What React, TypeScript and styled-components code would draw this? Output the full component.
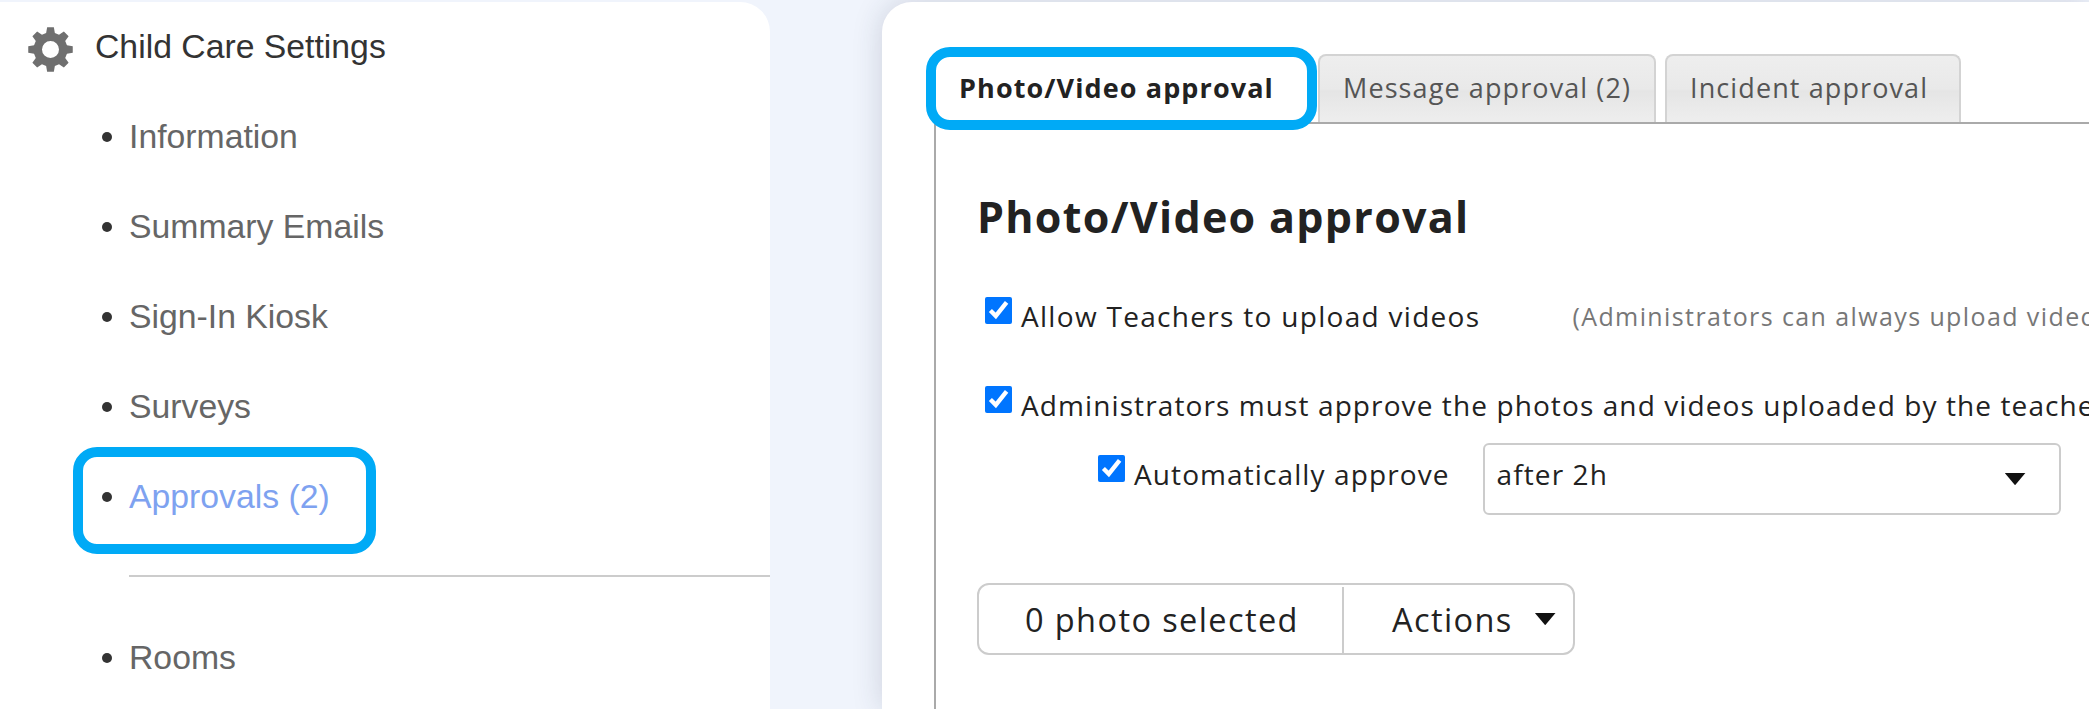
import React from 'react'
import styled, { createGlobalStyle } from 'styled-components'

const GlobalStyle = createGlobalStyle`
    html, body {
        margin: 0;
        padding: 0;
        background: #f0f4fc;
    }
`

const Page = styled.div`
    display: flex;
    justify-content: space-between;
    height: 709px;
    padding-top: 2px;
    box-sizing: border-box;
    overflow: hidden;
`

const Sidebar = styled.aside`
    width: 770px;
    flex: none;
    background: #fff;
    border-top-right-radius: 30px;
    font-family: "Liberation Sans", Arial, sans-serif;
    font-size: 33.75px;
`

const SidebarHeader = styled.div`
    display: flex;
    align-items: center;
    box-sizing: border-box;
    height: 90px;
    padding: 0 0 2px 28px;
    gap: 22px;
    color: #333;

    svg {
        margin-top: 7px;
    }
`

const Menu = styled.ul`
    list-style: none;
    margin: 0;
    padding: 0;
`

const MenuItem = styled.li<{ $active?: boolean }>`
    position: relative;
    display: flex;
    align-items: center;
    box-sizing: border-box;
    height: 90px;
    padding: 0 0 2px 129px;
    color: ${(p) => (p.$active ? '#7ea2f0' : '#666')};

    &::before {
        content: '';
        position: absolute;
        left: 102px;
        top: 40px;
        width: 10px;
        height: 10px;
        border-radius: 50%;
        background: #333;
    }
`

const MenuHighlight = styled.span`
    position: absolute;
    left: 73px;
    top: -5px;
    width: 303px;
    height: 107px;
    box-sizing: border-box;
    border: 10px solid #00aaf6;
    border-radius: 24px;
`

const MenuDivider = styled.li`
    height: 2px;
    margin: 33px 0 36px 129px;
    background: #ccc;
`

const Main = styled.main`
    width: 1207px;
    flex: none;
    background: #fff;
    border-top-left-radius: 30px;
    box-shadow: 0 0 30px rgba(40, 50, 80, 0.18);
    padding: 52px 0 0 52px;
    box-sizing: border-box;
    overflow: hidden;
    white-space: nowrap;
    font-family: "Open Sans", sans-serif;
    color: #222;
`

const TabBar = styled.div`
    display: flex;
    height: 68px;
`

const Tab = styled.div<{ $active?: boolean }>`
    position: relative;
    display: flex;
    align-items: center;
    box-sizing: border-box;
    margin-right: 9px;
    padding: 0 23px 3px;
    border: 2px solid #d3d3d3;
    border-bottom: 0;
    border-radius: 8px 8px 0 0;
    font-size: 27px;
    letter-spacing: 1.1px;
    color: #555;
    background: linear-gradient(#eeeeee, #e9e9e9 50%, #e5e5e5 53%, #eeeeee);

    &:last-child {
        padding-right: 31px;
    }

    ${(p) =>
        p.$active &&
        `
        width: 375px;
        background: #fff;
        color: #222;
        font-weight: 700;
        border-color: #fff;
    `}
`

const TabHighlight = styled.span`
    position: absolute;
    inset: -9px -10px -8px -10px;
    border: 10px solid #00aaf6;
    border-radius: 24px;
`

const TabPanel = styled.section`
    border-top: 2px solid #aaa;
    border-left: 2px solid #aaa;
    padding-left: 41px;
    height: 600px;
`

const Heading = styled.h1`
    margin: 68px 0 0;
    height: 50px;
    line-height: 50px;
    font-size: 43px;
    font-weight: 700;
    letter-spacing: 1.3px;
`

const CheckRow = styled.div<{ $top: number; $indent: number }>`
    display: flex;
    align-items: flex-start;
    margin-top: ${(p) => p.$top}px;
    padding-left: ${(p) => p.$indent}px;
`

const Check = styled.input.attrs({ type: 'checkbox', defaultChecked: true })<{ $offset?: number }>`
    width: 27px;
    height: 27px;
    margin: ${(p) => p.$offset ?? 0}px 9px 0 0;
    flex: none;
`

const CheckLabel = styled.label<{ $offset?: number; $spacing?: number }>`
    height: 40px;
    line-height: 38px;
    margin-top: ${(p) => p.$offset ?? 0}px;
    font-size: 28px;
    letter-spacing: ${(p) => p.$spacing ?? 1.1}px;
`

const Hint = styled.span`
    margin-left: 92px;
    height: 40px;
    line-height: 38px;
    font-size: 25px;
    letter-spacing: 1.4px;
    color: #777;
`

const Caret = styled.span<{ $size: number }>`
    width: ${(p) => p.$size}px;
    height: ${(p) => p.$size * 0.6}px;
    background: #111;
    clip-path: polygon(0 0, 100% 0, 50% 100%);
    flex: none;
`

const SelectBox = styled.div`
    display: flex;
    align-items: center;
    justify-content: space-between;
    box-sizing: border-box;
    flex: none;
    width: 578px;
    height: 72px;
    margin-left: 33px;
    padding: 0 33px 0 12px;
    border: 2px solid #ccc;
    border-radius: 6px;
    font-size: 28px;
    letter-spacing: 1.1px;

    span:first-child {
        margin-top: -10px;
    }
`

const ButtonGroup = styled.div`
    display: inline-flex;
    margin-top: 68px;
    height: 72px;
    box-sizing: border-box;
    border: 2px solid #ccc;
    border-radius: 12px;
    font-size: 32.5px;
    letter-spacing: 1.4px;
`

const GroupCount = styled.div`
    display: flex;
    align-items: center;
    width: 365px;
    padding-left: 46px;
    box-sizing: border-box;
    position: relative;

    &::after {
        content: '';
        position: absolute;
        right: 0;
        top: 2px;
        bottom: 0;
        width: 2px;
        background: #ccc;
    }
`

const GroupActions = styled.div`
    display: flex;
    align-items: center;
    gap: 22px;
    padding: 0 17px 0 48px;
`

const gearPath = (() => {
    const pts: string[] = []
    const c = 22.5
    const rim = 17
    const tip = 22.5
    for (let i = 0; i < 8; i++) {
        const a = (i * Math.PI) / 4
        const add = (r: number, d: number) => {
            const t = a + d - Math.PI / 2
            pts.push(`${(c + r * Math.cos(t)).toFixed(2)} ${(c + r * Math.sin(t)).toFixed(2)}`)
        }
        add(rim, -0.26)
        add(tip, -0.15)
        add(tip, 0.15)
        add(rim, 0.26)
    }
    return `M${pts.join('L')}Z`
})()

const Gear = () => (
    <svg width="45" height="45" viewBox="0 0 45 45">
        <path fillRule="evenodd" fill="#6f6f6f" d={`${gearPath}M22.5 14a8.5 8.5 0 1 0 0 17a8.5 8.5 0 1 0 0-17Z`} />
    </svg>
)

const App: React.FC = () => (
    <Page>
        <GlobalStyle />
        <Sidebar>
            <SidebarHeader>
                <Gear />
                Child Care Settings
            </SidebarHeader>
            <Menu>
                <MenuItem>Information</MenuItem>
                <MenuItem>Summary Emails</MenuItem>
                <MenuItem>Sign-In Kiosk</MenuItem>
                <MenuItem>Surveys</MenuItem>
                <MenuItem $active>
                    Approvals (2)
                    <MenuHighlight />
                </MenuItem>
                <MenuDivider />
                <MenuItem>Rooms</MenuItem>
            </Menu>
        </Sidebar>
        <Main>
            <TabBar>
                <Tab $active>
                    Photo/Video approval
                    <TabHighlight />
                </Tab>
                <Tab>Message approval (2)</Tab>
                <Tab>Incident approval</Tab>
            </TabBar>
            <TabPanel>
                <Heading>Photo/Video approval</Heading>
                <CheckRow $top={55} $indent={8}>
                    <Check />
                    <CheckLabel $spacing={1.3}>Allow Teachers to upload videos</CheckLabel>
                    <Hint>(Administrators can always upload videos)</Hint>
                </CheckRow>
                <CheckRow $top={49} $indent={8}>
                    <Check />
                    <CheckLabel>Administrators must approve the photos and videos uploaded by the teachers</CheckLabel>
                </CheckRow>
                <CheckRow $top={17} $indent={121}>
                    <Check $offset={12} />
                    <CheckLabel $offset={12}>Automatically approve</CheckLabel>
                    <SelectBox>
                        <span>after 2h</span>
                        <Caret $size={21} />
                    </SelectBox>
                </CheckRow>
                <ButtonGroup>
                    <GroupCount>0 photo selected</GroupCount>
                    <GroupActions>
                        Actions
                        <Caret $size={21} />
                    </GroupActions>
                </ButtonGroup>
            </TabPanel>
        </Main>
    </Page>
)

export default App
